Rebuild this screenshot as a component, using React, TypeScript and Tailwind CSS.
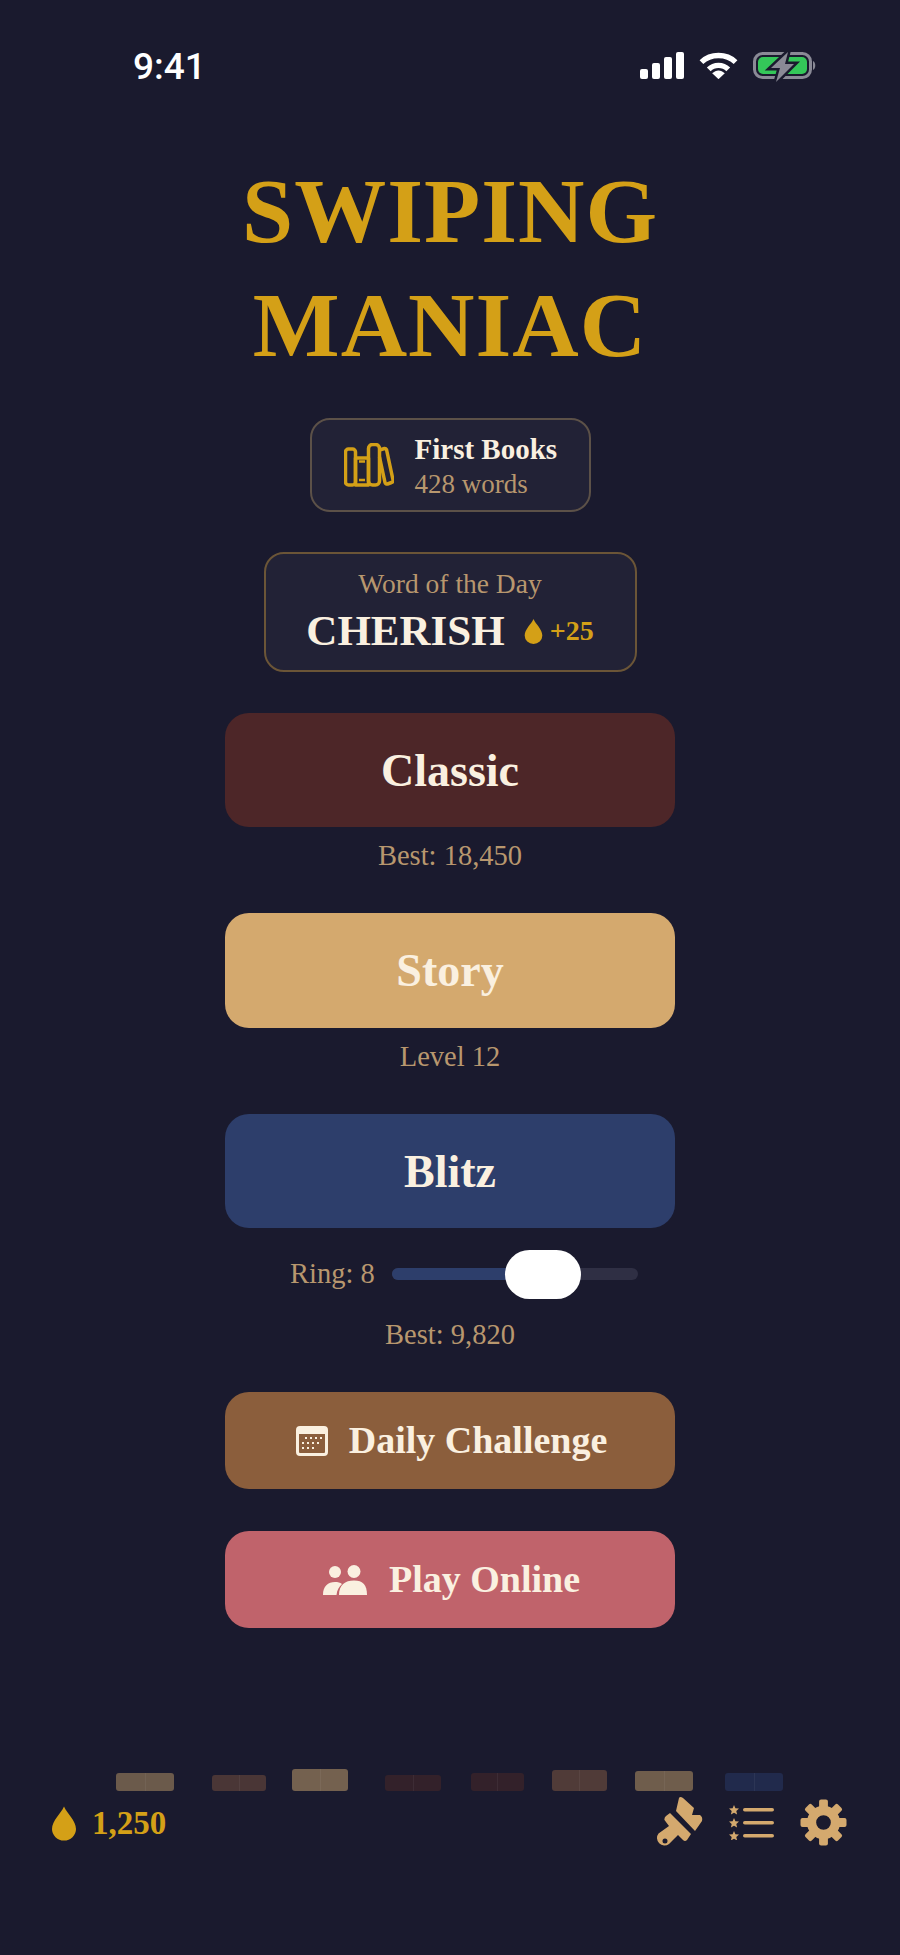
const Drop = ({ className }: { className: string }) => (
  <svg viewBox="0 0 24 34" className={className} fill="#d4a017">
    <path d="M12 0C9 7 0 14 0 22.500a12 11.500 0 0 0 24 0C24 14 15 7 12 0Z" />
  </svg>
)

const books = [
  { cls: 'ml-[116px] w-[58px] h-[18px] bg-[#6b5a4b]' },
  { cls: 'ml-[38px] w-[54px] h-[16px] bg-[#4a3636]' },
  { cls: 'ml-[26px] w-[56px] h-[22px] bg-[#74614f]' },
  { cls: 'ml-[37px] w-[56px] h-[16px] bg-[#33212a]' },
  { cls: 'ml-[30px] w-[53px] h-[18px] bg-[#33212a]' },
  { cls: 'ml-[28px] w-[55px] h-[21px] bg-[#503b38]' },
  { cls: 'ml-[28px] w-[58px] h-[20px] bg-[#6f5d4c]' },
  { cls: 'ml-[32px] w-[58px] h-[18px] bg-[#212a4c]' },
]

const teeth = [0, 45, 90, 135, 180, 225, 270, 315]

const subText = "text-[#b8976e] text-[28.5px] leading-[34px]"
const bigButton = "w-[450px] rounded-[24px] text-[#faf0e0] text-[46px] font-bold"
const smallButton = "w-[450px] h-[97px] pl-[3px] rounded-[24px] text-[#faf0e0] text-[38px] font-bold flex items-center justify-center"

export default function App() {
  return (
    <div className="w-[900px] h-[1955px] bg-[#1a1a2e] flex flex-col items-center font-['Liberation_Serif',serif] overflow-hidden">
      <div className="w-full h-[132px] flex items-start justify-between pl-[133px] pr-[83px] pt-[47px]">
        <span className="text-white text-[37px] leading-[40px] font-medium font-['Roboto',sans-serif]">9:41</span>
        <div className="flex items-start gap-[15px] pt-[5px]">
          <svg viewBox="0 0 44 27" className="w-[44px] h-[27px]" fill="#fff">
            <rect x="0" y="17" width="8" height="10" rx="2" />
            <rect x="12" y="11" width="8" height="16" rx="2" />
            <rect x="24" y="5" width="8" height="22" rx="2" />
            <rect x="36" y="0" width="8" height="27" rx="2" />
          </svg>
          <svg viewBox="0 0 40 27" className="w-[39px] h-[27px]" fill="none" stroke="#fff" strokeWidth="5.500">
            <path d="M2.500 10C12 1 28 1 37.500 10" />
            <path d="M10 17.500C15.500 12 24.500 12 30 17.500" />
            <path d="M13.500 21.500L20 27.500L26.500 21.500C22.500 17.500 17.500 17.500 13.500 21.500Z" fill="#fff" stroke="none" />
          </svg>
          <svg viewBox="0 0 64 30" className="w-[64px] h-[30px]">
            <rect x="1.500" y="1.500" width="56" height="24" rx="8" fill="none" stroke="#8a8a96" strokeWidth="3" />
            <rect x="5" y="5" width="49" height="17" rx="5" fill="#34c759" />
            <path d="M60 9c3 1 3 8 0 9Z" fill="#8a8a96" />
            <path d="M35 0L18 16H27L23 30L41 12H32Z" fill="#8a8a96" stroke="#1a1a2e" strokeWidth="5" paintOrder="stroke" />
          </svg>
        </div>
      </div>

      <h1 className="mt-[22px] text-center text-[#d4a017] text-[92px] leading-[114px] font-bold tracking-[1px]">
        SWIPING
        <br />
        MANIAC
      </h1>

      <div className="mt-[36px] w-[281px] h-[94px] rounded-[20px] border-2 border-[#5c5148] bg-[#222236] flex items-center pl-[32px] gap-[21px]">
        <svg viewBox="0 0 50 44" className="w-[50px] h-[44px]" fill="none" stroke="#d4a017" strokeWidth="3.500" strokeLinejoin="round">
          <rect x="1.500" y="6" width="10" height="36" rx="3" />
          <path d="M11.500 15H24.500V42H11.500Z" />
          <rect x="24.500" y="1.500" width="11" height="40.500" rx="4" />
          <path d="M15 18.500h6M15 37h6" strokeWidth="2.500" />
          <path d="M35.500 7l5-1.500a2 2 0 0 1 2 1L49 37a2 2 0 0 1-1.500 2.500l-4 1.500a2 2 0 0 1-2.500-1.500L35.500 14" />
        </svg>
        <div className="flex flex-col pt-[4px]">
          <span className="text-[#faf0e0] text-[29px] leading-[35px] font-bold">First Books</span>
          <span className="text-[#b8976e] text-[27px] leading-[35px]">428 words</span>
        </div>
      </div>

      <div className="mt-[40px] w-[373px] h-[120px] rounded-[20px] border-2 border-[#6b5537] bg-[#222236] flex flex-col items-center pt-[12px]">
        <span className="text-[#b8976e] text-[27.500px] leading-[36px]">Word of the Day</span>
        <div className="flex items-center gap-[19px] mt-[4px]">
          <span className="text-[#faf0e0] text-[43px] leading-[50px] font-bold">CHERISH</span>
          <div className="flex items-center gap-[7px]">
            <Drop className="w-[19px] h-[25px]" />
            <span className="text-[#d4a017] text-[28px] leading-[32px] font-bold">+25</span>
          </div>
        </div>
      </div>

      <button className={`mt-[41px] h-[114px] bg-[#4d2628] ${bigButton}`}>Classic</button>
      <p className={`mt-[12px] ${subText}`}>Best: 18,450</p>

      <button className={`mt-[40px] h-[115px] bg-[#d4a96e] ${bigButton}`}>Story</button>
      <p className={`mt-[12px] ${subText}`}>Level 12</p>

      <button className={`mt-[40px] h-[114px] bg-[#2d3e6b] ${bigButton}`}>Blitz</button>

      <div className="mt-[21px] w-[450px] pl-[65px] flex items-center gap-[17px] h-[49px]">
        <span className="text-[#b8976e] text-[28.500px] leading-[34px]">Ring: 8</span>
        <div className="relative w-[246px] h-[12px] rounded-full bg-[#2f2f44]">
          <div className="w-[130px] h-[12px] rounded-full bg-[#2d3e6b]" />
          <div className="absolute left-[113px] top-[-18px] w-[76px] h-[49px] rounded-full bg-white" />
        </div>
      </div>
      <p className={`mt-[20px] ${subText}`}>Best: 9,820</p>

      <button className={`mt-[40px] bg-[#8b5e3c] gap-[21px] ${smallButton}`}>
        <svg viewBox="0 0 32 30" className="w-[32px] h-[30px]" fill="#faf0e0">
          <path fillRule="evenodd" d="M4 0h24a4 4 0 0 1 4 4v22a4 4 0 0 1-4 4H4a4 4 0 0 1-4-4V4a4 4 0 0 1 4-4ZM3 8v18a1 1 0 0 0 1 1h24a1 1 0 0 0 1-1V8Z" />
          <path d="M9 11h2v2H9zM14 11h2v2h-2zM19 11h2v2h-2zM24 11h2v2h-2zM6 16h2v2H6zM11 16h2v2h-2zM16 16h2v2h-2zM21 16h2v2h-2zM6 21h2v2H6zM11 21h2v2h-2zM16 21h2v2h-2z" />
        </svg>
        Daily Challenge
      </button>

      <button className={`mt-[42px] bg-[#c0636b] gap-[22px] ${smallButton}`}>
        <svg viewBox="0 0 44 30" className="w-[44px] h-[30px]" fill="#faf0e0">
          <circle cx="12" cy="7" r="6" />
          <circle cx="31" cy="6.500" r="6.500" />
          <path d="M0 30c0-9 5-13 12-13 3 0 5 .6 7 2-3 3-5 6-5.500 11Z" />
          <path d="M16 30c0-10 6-14.500 15-14.500s13 4.500 13 14.500Z" />
        </svg>
        Play Online
      </button>

      <div className="mt-[141px] w-full h-[22px] flex items-end">
        {books.map((b, i) => (
          <div key={i} className={`${b.cls} rounded-[3px] flex justify-center`}>
            <div className="w-[1px] h-full bg-white/5" />
          </div>
        ))}
      </div>

      <div className="w-full flex items-start justify-between pl-[52px] pr-[53px] mt-[5px]">
        <div className="flex items-center gap-[16px] mt-[9px]">
          <Drop className="w-[24px] h-[35px]" />
          <span className="text-[#d4a017] text-[33px] leading-[36px] font-bold">1,250</span>
        </div>
        <div className="flex items-start">
          <svg viewBox="6 5 47 52" className="w-[47px] h-[52px]" fill="#d4a96e">
            <path d="M26 20L29 7Q30 5 33 7L44 17L42 24L50 24Q53 26 52 30L45 40Z" />
            <path fillRule="evenodd" d="M14.500 29Q14 27 16 25L20 22L41 43L37 49Q35 51 33 49L28 44L19 53A7.500 7.500 0 0 1 8.500 42.500L19 35ZM15 47.500a2.500 2.500 0 1 0 0 5 2.500 2.500 0 0 0 0-5Z" />
          </svg>
          <svg viewBox="0 0 45 35" className="w-[45px] h-[35px] ml-[26px] mt-[9px]" fill="#d4a96e">
            <path d="M5 0l1.400 3.200 3.600.4-2.700 2.400.8 3.500L5 7.700 1.900 9.500l.8-3.500L0 3.600l3.600-.4Z" />
            <path d="M5 13l1.400 3.200 3.600.4-2.700 2.400.8 3.500L5 20.700 1.900 22.500l.8-3.500L0 16.600l3.600-.4Z" />
            <path d="M5 26l1.400 3.200 3.600.4-2.700 2.400.8 3.500L5 33.700 1.900 35.500l.8-3.500L0 29.600l3.600-.4Z" />
            <rect x="14" y="3" width="31" height="3.500" rx="1.750" />
            <rect x="14" y="16" width="31" height="3.500" rx="1.750" />
            <rect x="14" y="29" width="31" height="3.500" rx="1.750" />
          </svg>
          <svg viewBox="0 0 48 48" className="w-[47px] h-[47px] ml-[26px] mt-[3px]" fill="#d4a96e">
            {teeth.map(a => (
              <rect key={a} x="19.500" y="0.500" width="9" height="12" rx="2" transform={`rotate(${a} 24 24)`} />
            ))}
            <path fillRule="evenodd" d="M24 7a17 17 0 1 0 0 34 17 17 0 0 0 0-34ZM24 16.500a7.500 7.500 0 1 1 0 15 7.500 7.500 0 0 1 0-15Z" />
          </svg>
        </div>
      </div>
    </div>
  )
}
